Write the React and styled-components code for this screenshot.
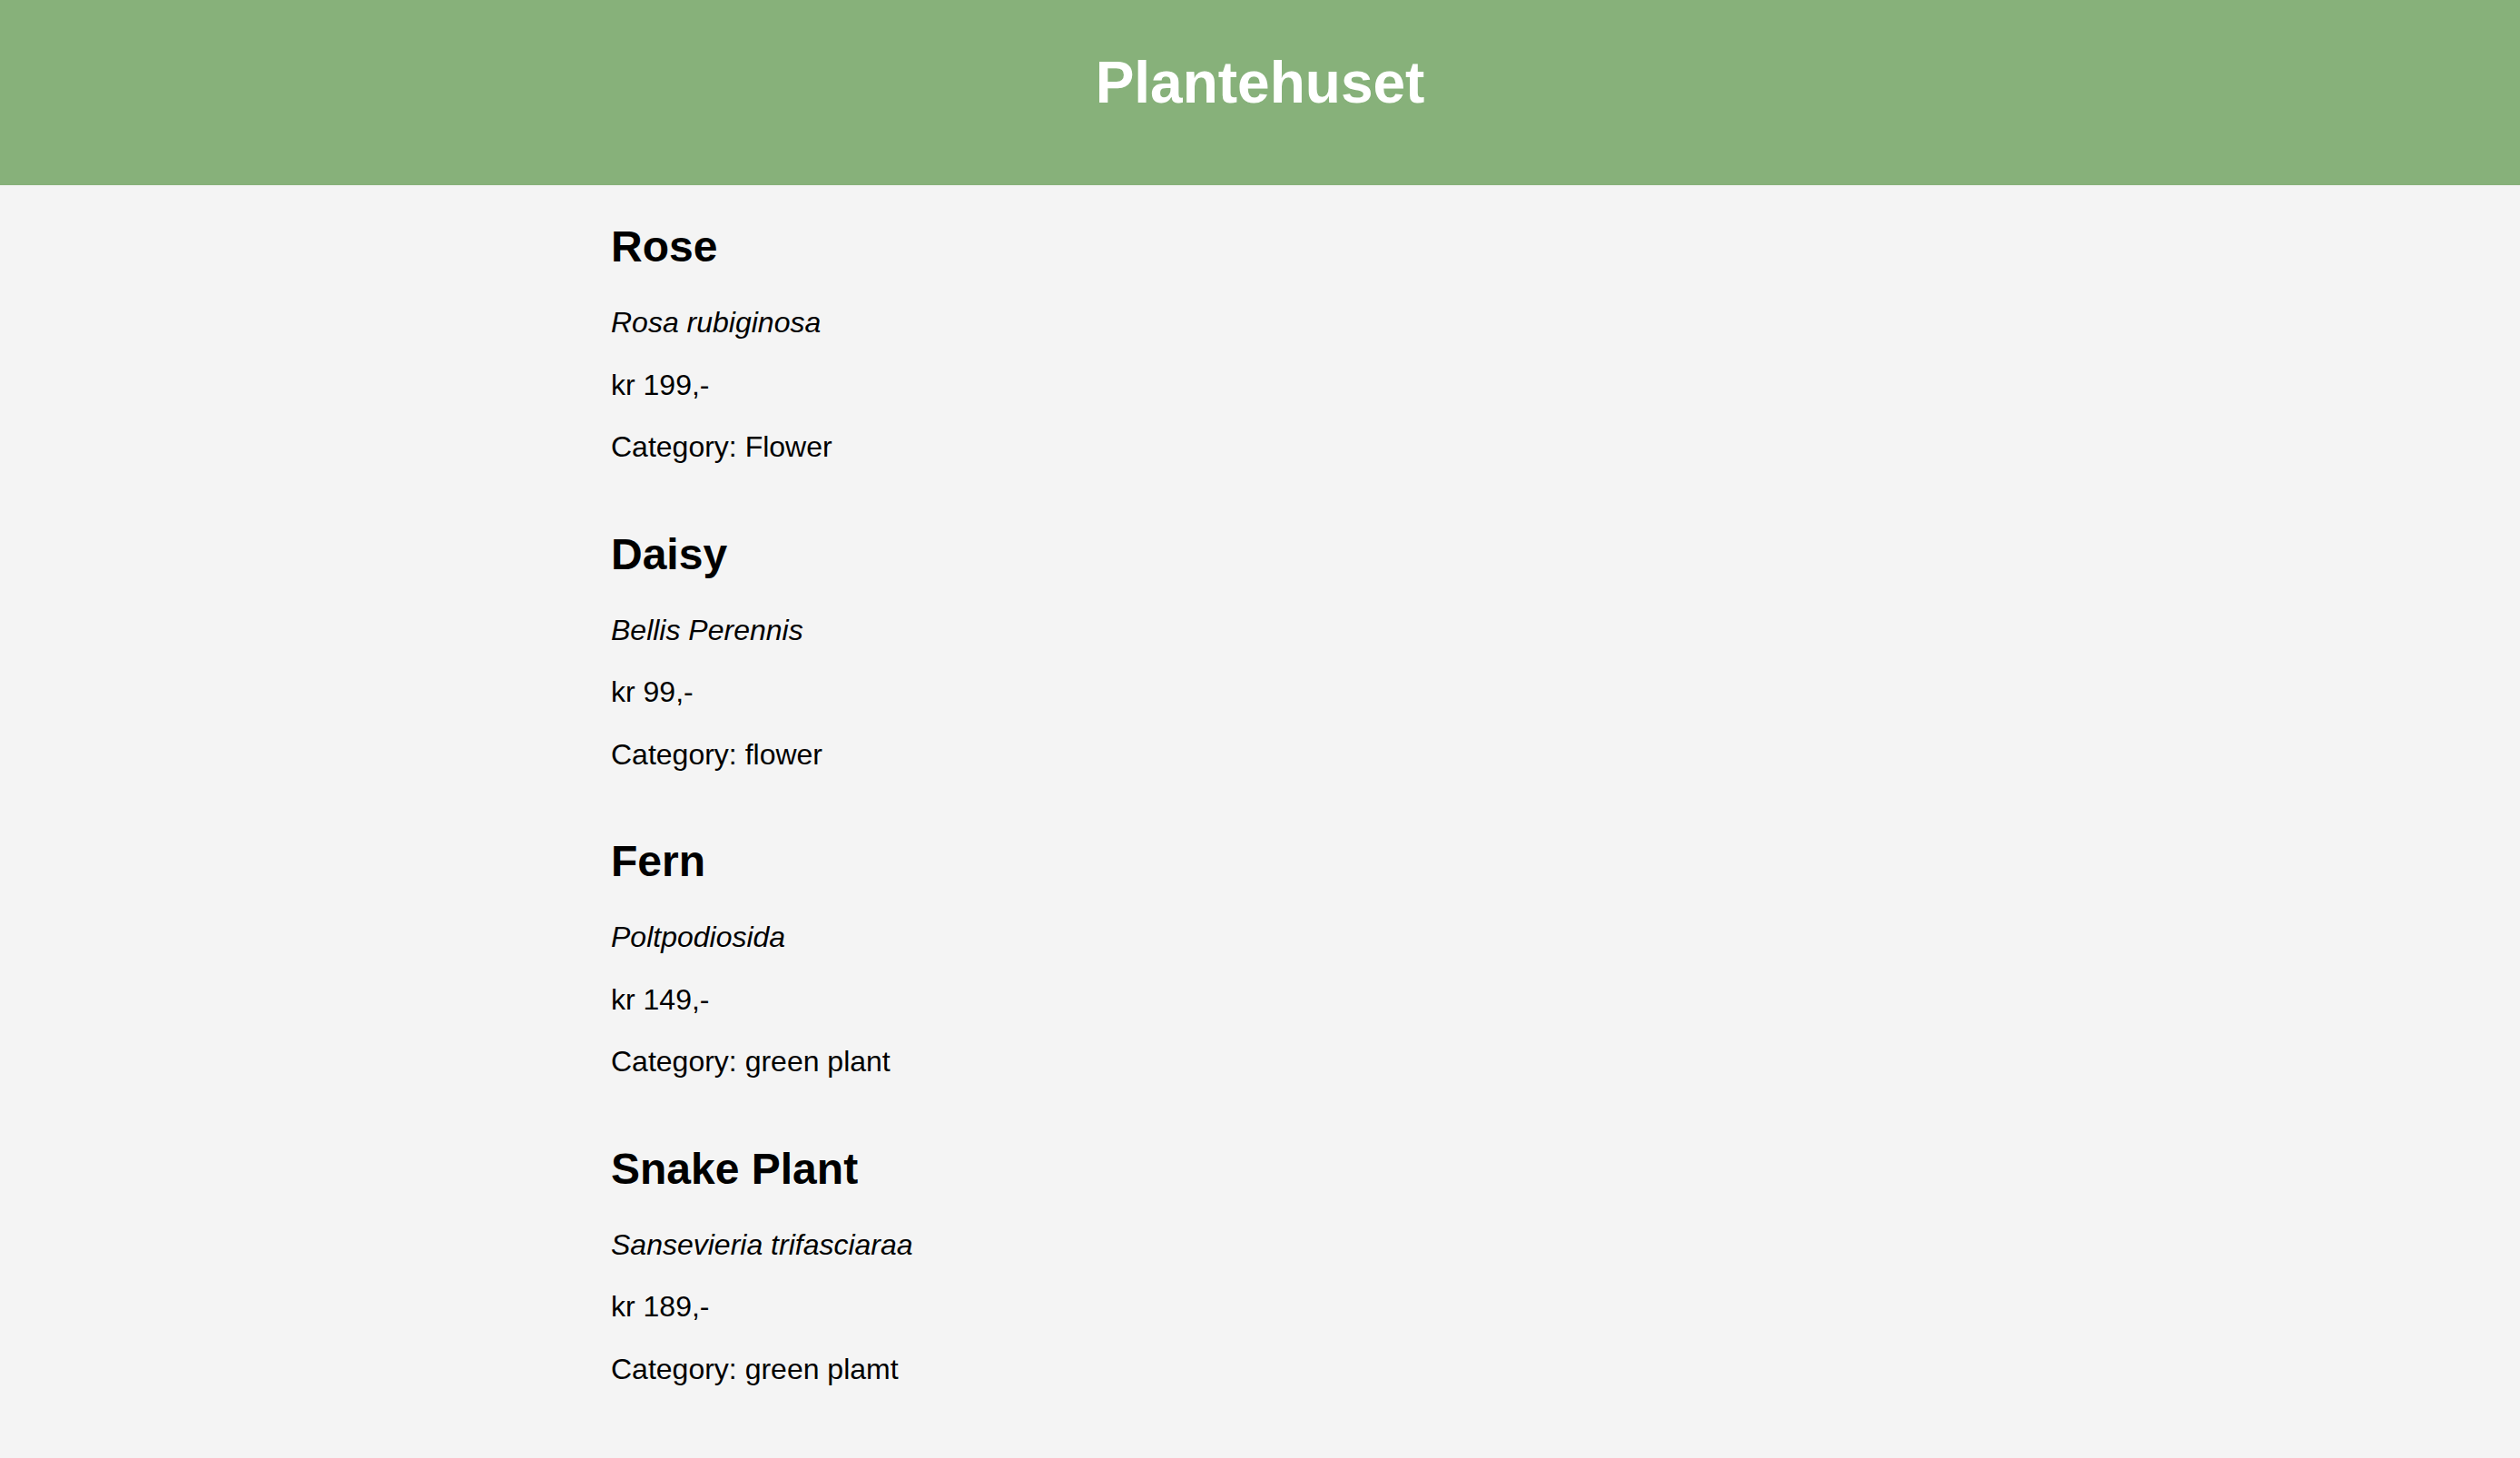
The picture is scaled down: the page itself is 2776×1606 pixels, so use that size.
import React from "react";
import styled, { createGlobalStyle } from "styled-components";

const Global = createGlobalStyle`
  html, body {
    margin: 0;
    padding: 0;
    background: #f4f4f4;
    min-height: 100%;
  }
  body {
    font-family: "Liberation Sans", Arial, sans-serif;
    font-size: 32px;
    color: #000;
  }
`;

const Header = styled.header`
  background: #87b17a;
  height: 204px;
  box-sizing: border-box;
  padding-top: 12px;
  text-align: center;
`;

const Title = styled.h1`
  margin: 42px 0 0;
  font-size: 64px;
  font-weight: bold;
  color: #fff;
`;

const List = styled.main`
  display: flex;
  flex-direction: column;
  max-width: 1430px;
  margin: 0 auto;
`;

const Card = styled.article`
  display: flow-root;
`;

const Name = styled.h2`
  font-size: 48px;
  font-weight: bold;
  margin: 40px 0 38px;
`;

const Line = styled.p`
  margin: 31.5px 0;
  font-style: ${(p) => (p.$italic ? "italic" : "normal")};
`;

const plants = [
  { name: "Rose", latin: "Rosa rubiginosa", price: "kr 199,-", category: "Flower" },
  { name: "Daisy", latin: "Bellis Perennis", price: "kr 99,-", category: "flower" },
  { name: "Fern", latin: "Poltpodiosida", price: "kr 149,-", category: "green plant" },
  { name: "Snake Plant", latin: "Sansevieria trifasciaraa", price: "kr 189,-", category: "green plamt" },
];

export default function App() {
  return (
    <>
      <Global />
      <Header>
        <Title>Plantehuset</Title>
      </Header>
      <List>
        {plants.map((p) => (
          <Card key={p.name}>
            <Name>{p.name}</Name>
            <Line $italic>{p.latin}</Line>
            <Line>{p.price}</Line>
            <Line>Category: {p.category}</Line>
          </Card>
        ))}
      </List>
    </>
  );
}
